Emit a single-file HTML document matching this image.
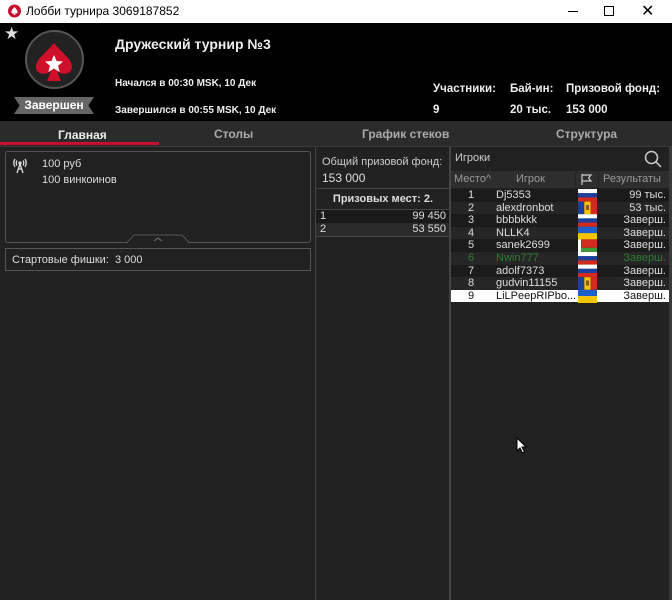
<!DOCTYPE html>
<html><head><meta charset="utf-8"><style>
*{margin:0;padding:0;box-sizing:border-box}
body{width:672px;height:600px;background:#212121;font-family:"Liberation Sans","DejaVu Sans",sans-serif;position:relative;overflow:hidden;color:#ddd}
.a{position:absolute}
.tb{left:0;top:0;width:672px;height:23px;background:#fff;color:#000;font-size:12px}
.hd{left:0;top:23px;width:672px;height:98px;background:#000;color:#eee;font-weight:bold}
.tabs{left:0;top:121px;width:672px;height:25px;background:#2b2b2b;font-size:12px;font-weight:bold;color:#aaa}
.row{position:absolute;left:451px;width:219px;height:12.6px;font-size:11px;line-height:12.6px;color:#ddd}
.row span{position:absolute}
</style></head><body>
<div class="a tb">
 <svg class="a" style="left:8px;top:4px" width="13" height="14" viewBox="0 0 13 14"><circle cx="6.5" cy="7" r="6.5" fill="#c8102e"/><path d="M6.5 3 C4 6 3 7 3.5 8.5 C4 10 6 9.8 6.5 9 L5.5 11 H7.5 L6.5 9 C7 9.8 9 10 9.5 8.5 C10 7 9 6 6.5 3Z" fill="#fff"/></svg>
 <div class="a" style="left:26px;top:4px">Лобби турнира 3069187852</div>
 <div class="a" style="left:568px;top:11px;width:10px;height:1px;background:#000"></div>
 <div class="a" style="left:604px;top:6px;width:10px;height:10px;border:1px solid #000"></div>
 <div class="a" style="left:641px;top:1px;font-size:16px">✕</div>
</div>
<div class="a hd">
 <div class="a" style="left:4px;top:1px;font-size:17px;color:#ddd">★</div>
 <div class="a" style="left:25px;top:7px;width:59px;height:59px;border-radius:50%;background:#222;border:2px solid #555"></div>
 <svg class="a" style="left:36px;top:20px" width="36" height="40" viewBox="0 0 36 40"><path d="M18 0 C10 10 0 16 0 24 C0 31 9 33 15 28 L11 38 H25 L21 28 C27 33 36 31 36 24 C36 16 26 10 18 0Z" fill="#d0102a"/><path d="M18 12 l2.6 6 6.4.5-4.9 4.2 1.6 6.3-5.7-3.4-5.7 3.4 1.6-6.3-4.9-4.2 6.4-.5z" fill="#fff"/></svg>
 <div class="a" style="left:14px;top:74px;width:80px;height:17px;background:#666;clip-path:polygon(0 0,100% 0,93% 50%,100% 100%,0 100%,7% 50%);color:#fff;font-size:12px;text-align:center;line-height:17px">Завершен</div>
 <div class="a" style="left:115px;top:13px;font-size:14px">Дружеский турнир №3</div>
 <div class="a" style="left:115px;top:55px;font-size:10px">Начался в 00:30 MSK, 10 Дек</div>
 <div class="a" style="left:115px;top:82px;font-size:10px">Завершился в 00:55 MSK, 10 Дек</div>
 <div class="a" style="left:433px;top:60px;font-size:11.5px">Участники:</div>
 <div class="a" style="left:510px;top:60px;font-size:11.5px">Бай-ин:</div>
 <div class="a" style="left:566px;top:60px;font-size:11.5px">Призовой фонд:</div>
 <div class="a" style="left:433px;top:81px;font-size:11.5px">9</div>
 <div class="a" style="left:510px;top:81px;font-size:11.5px">20 тыс.</div>
 <div class="a" style="left:566px;top:81px;font-size:11.5px">153 000</div>
</div>
<div class="a tabs">
 <div class="a" style="left:58px;top:7px;color:#eee">Главная</div>
 <div class="a" style="left:214px;top:6px">Столы</div>
 <div class="a" style="left:362px;top:6px">График стеков</div>
 <div class="a" style="left:556px;top:6px">Структура</div>
 <div class="a" style="left:0;top:21px;width:159px;height:3px;background:#c8102e"></div>
</div>
<div class="a" style="left:0;top:146px;width:672px;height:1px;background:#3a3a3a"></div>
<!-- left -->
<div class="a" style="left:5px;top:151px;width:306px;height:92px;border:1px solid #555;border-radius:3px"></div>
<svg class="a" style="left:126px;top:234px" width="64" height="10" viewBox="0 0 64 10"><path d="M0 9.5 L8 1 H56 L64 9.5" fill="#212121" stroke="#555" stroke-width="1"/><path d="M28 7 L32 4 L36 7" fill="none" stroke="#777" stroke-width="1"/></svg>
<svg class="a" style="left:12px;top:158px" width="16" height="16" viewBox="0 0 16 16" fill="none" stroke="#ddd" stroke-width="1.3"><path d="M8 6 L5 15 M8 6 L11 15 M6 11 H10"/><circle cx="8" cy="5" r="1" fill="#ddd"/><path d="M5 2.5 Q3.5 5 5 7.5 M11 2.5 Q12.5 5 11 7.5 M3 1 Q0.5 5 3 9 M13 1 Q15.5 5 13 9"/></svg>
<div class="a" style="left:42px;top:158px;font-size:11px">100 руб</div>
<div class="a" style="left:42px;top:174px;font-size:11px">100 винкоинов</div>
<div class="a" style="left:5px;top:248px;width:306px;height:23px;border:1px solid #555"></div>
<div class="a" style="left:12px;top:254px;font-size:11px">Стартовые фишки:&nbsp; 3 000</div>
<div class="a" style="left:315px;top:147px;width:1px;height:453px;background:#444"></div>
<!-- middle -->
<div class="a" style="left:322px;top:156px;font-size:11px;color:#ccc">Общий призовой фонд:</div>
<div class="a" style="left:322px;top:171px;font-size:12px;color:#ddd">153 000</div>
<div class="a" style="left:316px;top:188px;width:134px;height:1px;background:#444"></div>
<div class="a" style="left:316px;top:193px;width:134px;text-align:center;font-size:11px;font-weight:bold;color:#ddd">Призовых мест: 2.</div>
<div class="a" style="left:316px;top:209px;width:134px;height:1px;background:#444"></div>
<div class="a" style="left:316px;top:210px;width:134px;height:13px;background:#1a1a1a;font-size:11px;line-height:13px"><span class="a" style="left:4px">1</span><span class="a" style="right:4px">99 450</span></div>
<div class="a" style="left:316px;top:223px;width:134px;height:13px;background:#2a2a2a;font-size:11px;line-height:13px"><span class="a" style="left:4px">2</span><span class="a" style="right:4px">53 550</span></div>
<div class="a" style="left:316px;top:236px;width:134px;height:1px;background:#444"></div>
<div class="a" style="left:449px;top:147px;width:2px;height:453px;background:#444"></div>
<!-- right -->
<div class="a" style="left:455px;top:152px;font-size:11px;color:#ccc">Игроки</div>
<svg class="a" style="left:644px;top:150px" width="18" height="18" viewBox="0 0 18 18" fill="none" stroke="#ccc" stroke-width="1.5"><circle cx="7.5" cy="7.5" r="6"/><path d="M12 12 L17 17"/></svg>
<div class="a" style="left:451px;top:171px;width:219px;height:17px;background:#2e2e2e;font-size:11px;color:#999;line-height:17px">
 <span class="a" style="left:3px">Место^</span><span class="a" style="left:65px">Игрок</span>
 <span class="a" style="left:124px;top:0;width:1px;height:17px;background:#222"></span>
 <span class="a" style="left:147px;top:0;width:1px;height:17px;background:#222"></span>
 <span class="a" style="left:152px">Результаты</span>
</div>
<svg class="a" style="left:580px;top:173px" width="13" height="13" viewBox="0 0 13 13" fill="none" stroke="#ccc" stroke-width="1.2"><path d="M2 1 V12 M2 2 H11 L8.5 5 L11 8 H2"/></svg>
<div class="row" style="top:189px;background:#1b1b1b"><span style="left:17px">1</span><span style="left:45px">Dj5353</span><span style="right:4px">99 тыс.</span></div>
<div class="row" style="top:201.6px;background:#262626"><span style="left:17px">2</span><span style="left:45px">alexdronbot</span><span style="right:4px">53 тыс.</span></div>
<div class="row" style="top:214.2px;background:#1b1b1b"><span style="left:17px">3</span><span style="left:45px">bbbbkkk</span><span style="right:4px">Заверш.</span></div>
<div class="row" style="top:226.8px;background:#262626"><span style="left:17px">4</span><span style="left:45px">NLLK4</span><span style="right:4px">Заверш.</span></div>
<div class="row" style="top:239.4px;background:#1b1b1b"><span style="left:17px">5</span><span style="left:45px">sanek2699</span><span style="right:4px">Заверш.</span></div>
<div class="row" style="top:252px;background:#262626;color:#2e7d32"><span style="left:17px">6</span><span style="left:45px">Nwin777</span><span style="right:4px">Заверш.</span></div>
<div class="row" style="top:264.6px;background:#1b1b1b"><span style="left:17px">7</span><span style="left:45px">adolf7373</span><span style="right:4px">Заверш.</span></div>
<div class="row" style="top:277.2px;background:#262626"><span style="left:17px">8</span><span style="left:45px">gudvin11155</span><span style="right:4px">Заверш.</span></div>
<div class="row" style="top:289.8px;background:#fff;color:#111"><span style="left:17px">9</span><span style="left:45px">LiLPeepRIPbo...</span><span style="right:4px">Заверш.</span></div>
<!-- flags -->
<svg class="a" style="left:578px;top:189px" width="19" height="114" viewBox="0 0 19 114">
 <rect y="0" width="19" height="4.2" fill="#fff"/><rect y="4.2" width="19" height="4.2" fill="#1c3f9e"/><rect y="8.4" width="19" height="4.2" fill="#d52b1e"/>
 <rect y="12.6" width="6.3" height="12.6" fill="#1c3f9e"/><rect x="6.3" y="12.6" width="6.4" height="12.6" fill="#f5c400"/><rect x="12.7" y="12.6" width="6.3" height="12.6" fill="#d52b1e"/><rect x="8" y="16" width="3" height="5" fill="#8a5a1a"/>
 <rect y="25.2" width="19" height="4.2" fill="#fff"/><rect y="29.4" width="19" height="4.2" fill="#1c3f9e"/><rect y="33.6" width="19" height="4.2" fill="#d52b1e"/>
 <rect y="37.8" width="19" height="6.3" fill="#1c5fcc"/><rect y="44.1" width="19" height="6.3" fill="#f5c400"/>
 <rect y="50.4" width="19" height="8.4" fill="#d52b1e"/><rect y="58.8" width="19" height="4.2" fill="#3a9a3a"/><rect y="50.4" width="3" height="12.6" fill="#fff"/>
 <rect y="63" width="19" height="4.2" fill="#fff"/><rect y="67.2" width="19" height="4.2" fill="#1c3f9e"/><rect y="71.4" width="19" height="4.2" fill="#d52b1e"/>
 <rect y="75.6" width="19" height="4.2" fill="#fff"/><rect y="79.8" width="19" height="4.2" fill="#1c3f9e"/><rect y="84" width="19" height="4.2" fill="#d52b1e"/>
 <rect y="88.2" width="6.3" height="12.6" fill="#1c3f9e"/><rect x="6.3" y="88.2" width="6.4" height="12.6" fill="#f5c400"/><rect x="12.7" y="88.2" width="6.3" height="12.6" fill="#d52b1e"/><rect x="8" y="91.5" width="3" height="5" fill="#8a5a1a"/>
 <rect y="100.8" width="19" height="6.3" fill="#1c5fcc"/><rect y="107.1" width="19" height="6.9" fill="#f5c400"/>
</svg>
<div class="a" style="left:669px;top:147px;width:3px;height:453px;background:#3a3a3a"></div>
<svg class="a" style="left:516px;top:437px" width="11" height="17" viewBox="0 0 11 17"><path d="M1 1 V14 L4 11 L6.5 16 L8.5 15 L6 10 H10 Z" fill="#fff" stroke="#000" stroke-width="1"/></svg>
</body></html>
